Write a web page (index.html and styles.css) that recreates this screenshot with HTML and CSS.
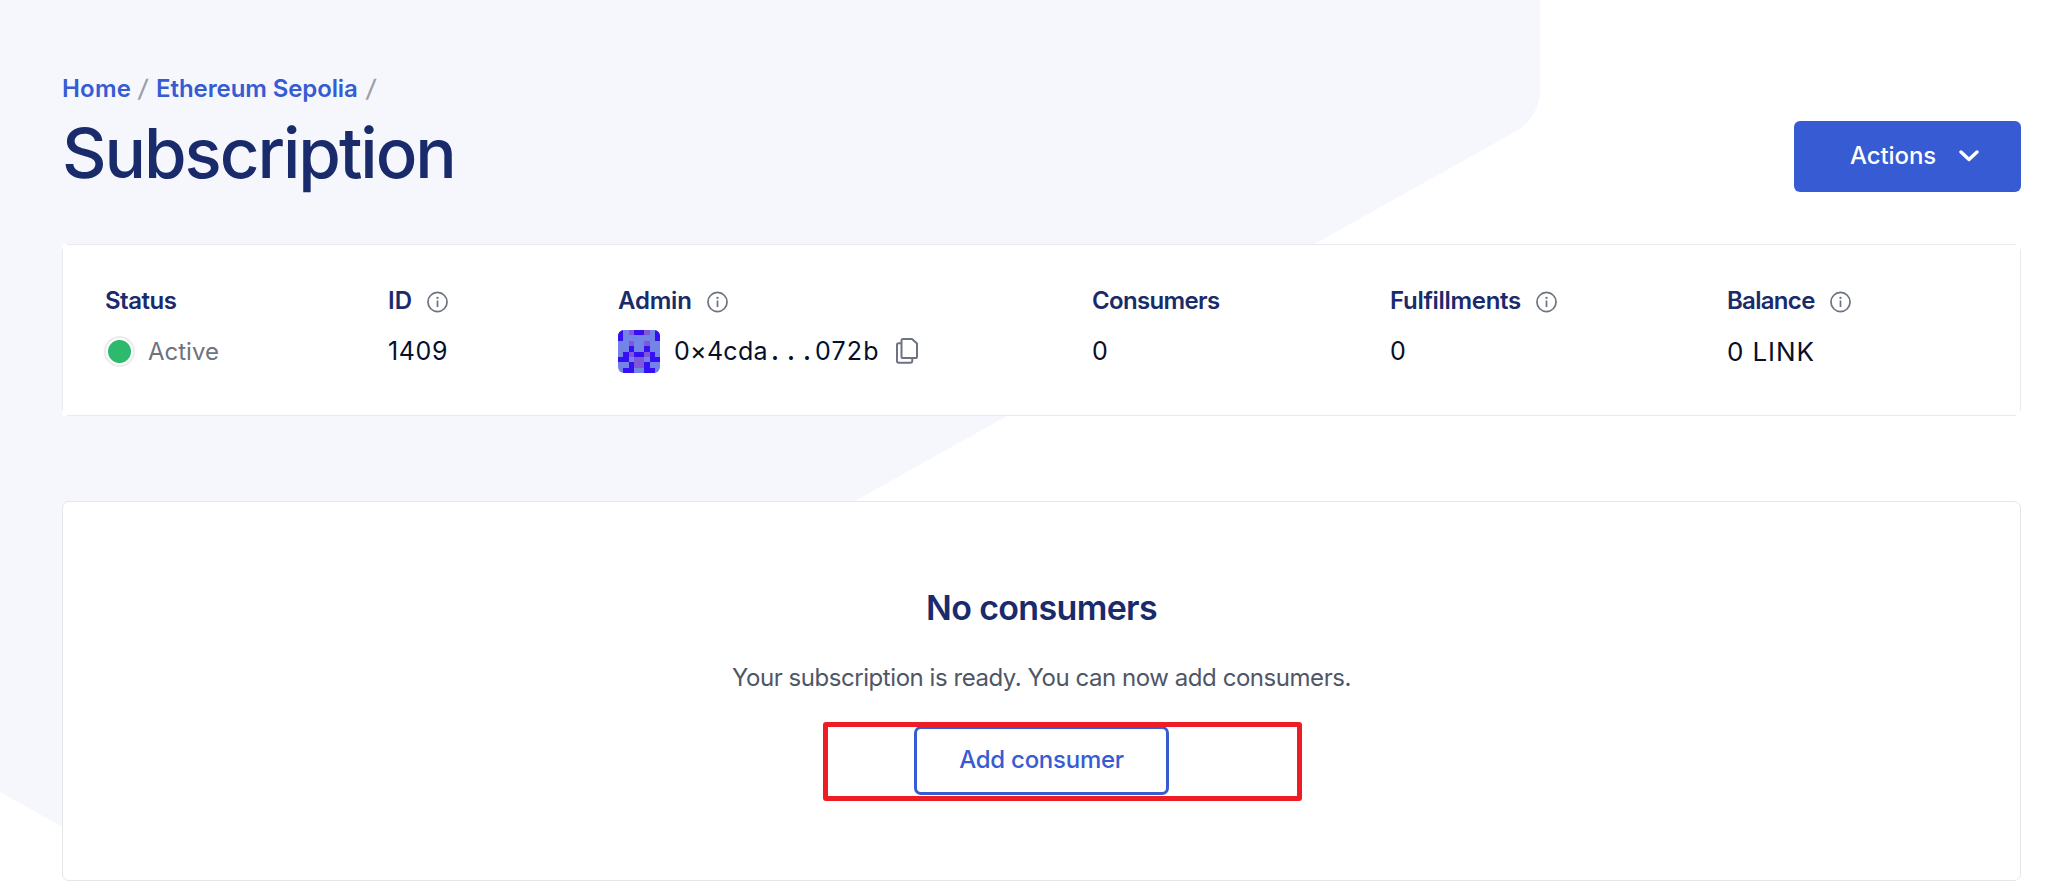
FILE: index.html
```html
<!DOCTYPE html>
<html lang="en">
<head>
<meta charset="utf-8">
<title>Subscription</title>
<link rel="stylesheet" href="styles.css">
</head>
<body>
<svg class="backdrop" viewBox="0 0 2053 887"><path d="M0 0H1540V97Q1536 117 1520 129L360 778Q240 845 120 856Q90 843 0 792Z" fill="#f5f7fd"/></svg>
<svg class="defs" width="0" height="0">
  <symbol id="info" viewBox="0 0 22 22"><g fill="none" stroke="#6d7380" stroke-width="1.8"><circle cx="11" cy="11" r="10"/><path d="M11 9.400V16.300" stroke-width="1.8"/></g><circle cx="11" cy="6.700" r="1.200" fill="#6d7380"/></symbol>
</svg>
<main class="page">
  <header class="head">
    <div>
      <nav class="crumbs"><a class="t home">Home</a><span class="slash">/</span><a class="t net">Ethereum Sepolia</a><span class="slash">/</span></nav>
      <h1 class="title"><span class="t">Subscription</span></h1>
    </div>
    <button class="actions"><span class="t">Actions</span><svg class="chev" viewBox="0 0 20 12"><path d="M2 2l8 7.500L18 2" fill="none" stroke="#fff" stroke-width="3.400" stroke-linecap="round" stroke-linejoin="round"/></svg></button>
  </header>
  <section class="stats">
    <div class="stat"><div class="label"><span class="t status">Status</span></div><div class="value active"><i class="dot"></i><span class="t">Active</span></div></div>
    <div class="stat"><div class="label"><span class="t id">ID</span><svg class="info"><use href="#info"/></svg></div><div class="value"><span class="t num">1409</span></div></div>
    <div class="stat"><div class="label"><span class="t admin">Admin</span><svg class="info"><use href="#info"/></svg></div>
      <div class="value addr">
        <svg class="avatar" viewBox="0 0 8 8" preserveAspectRatio="none" shape-rendering="crispEdges"><path fill="#7383e6" d="M0 0h8v8H0z"/><path fill="#3510f5" d="M0 0h1v2H0zM3 0h2v1H3zM7 0h1v2H7zM2 3h1v1H2zM5 3h1v1H5zM1 4h1v1H1zM3 4h2v1H3zM6 4h1v1H6zM0 5h2v1H0zM6 5h2v1H6zM2 6h1v1H2zM5 6h1v1H5zM1 7h2v1H1zM5 7h2v1H5z"/><path fill="#7f58d9" d="M2 0h1v1H2zM5 0h1v1H5zM2 2h1v1H2zM5 2h1v1H5zM2 4h1v1H2zM5 4h1v1H5zM3 5h2v2H3z"/></svg>
        <span class="hash"><span class="t h1">0×4cda</span><span class="t dots">...</span><span class="t h2">072b</span></span>
        <svg class="copy" viewBox="0 0 22 26"><g fill="none" stroke="#6d7380" stroke-width="2" stroke-linejoin="round"><path d="M5.500 2.600q0-1.600 1.600-1.600H16l5 4.600V18.400q0 1.600-1.600 1.600H7.100q-1.600 0-1.600-1.600z"/><path d="M5.500 5.200H2.500Q1 5.200 1 6.800V23q0 1.700 1.700 1.700H14.500q1.800 0 1.800-2V20"/></g></svg>
      </div></div>
    <div class="stat"><div class="label"><span class="t cons">Consumers</span></div><div class="value"><span class="t num">0</span></div></div>
    <div class="stat"><div class="label"><span class="t ful">Fulfillments</span><svg class="info"><use href="#info"/></svg></div><div class="value"><span class="t num">0</span></div></div>
    <div class="stat"><div class="label"><span class="t bal">Balance</span><svg class="info"><use href="#info"/></svg></div><div class="value"><span class="t link">0 LINK</span></div></div>
  </section>
  <section class="empty">
    <h2><span class="t">No consumers</span></h2>
    <p><span class="t">Your subscription is ready. You can now add consumers.</span></p>
    <div class="cta"><button class="add"><span class="t">Add consumer</span></button><div class="mark"></div></div>
  </section>
</main>
</body>
</html>
```
FILE: styles.css
```css
* { box-sizing: border-box; }
body { margin: 0; background: #fff; font-family: Inter, "Liberation Sans", sans-serif; color: #05102b; font-size: 24px; overflow: hidden; }
.backdrop { position: absolute; inset: 0; width: 2053px; height: 887px; z-index: -1; }
.defs { position: absolute; }
.page { padding: 73px 32px 0 62px; }
.t { white-space: nowrap; display: inline-block; }
.head { height: 171px; display: flex; justify-content: space-between; }
.crumbs { display: flex; gap: 7px; line-height: 32px; font-weight: 600; color: #375bd2; }
.home { letter-spacing: 0.2px; margin-right: -1px; }
.net { letter-spacing: -0.1px; }
.slash { color: #9c9fa8; font-weight: 500; width: 12px; text-align: center; transform: skewX(-8deg); }
.title { margin: 0; font-size: 69px; line-height: 96px; font-weight: 500; color: #1a2b6b; letter-spacing: -2.05px; }
.actions { margin-top: 48px; width: 227px; height: 71px; border: 0; border-radius: 6px; background: #375bd2; color: #fff; font: 500 24px/70px Inter, sans-serif; letter-spacing: -0.1px; padding: 0 42px 1px 56px; display: flex; align-items: center; justify-content: space-between; }
.chev { width: 20px; height: 12px; }
/* hairlines stop short of the corners */
.stats {
  height: 172px; padding: 41px 0 0 44px; display: grid; grid-template-columns: 282px 230px 474px 298px 337px 1fr;
  border-radius: 2px;
  background:
    linear-gradient(#e9eaed, #e9eaed) center top / calc(100% - 10px) 1px no-repeat,
    linear-gradient(#e9eaed, #e9eaed) center bottom / calc(100% - 10px) 1px no-repeat,
    linear-gradient(#e9eaed, #e9eaed) left center / 1px calc(100% - 10px) no-repeat,
    linear-gradient(#e9eaed, #e9eaed) right center / 1px calc(100% - 10px) no-repeat,
    #fff;
}
.label { display: flex; align-items: center; gap: 15px; height: 32px; color: #1a2b6b; font-weight: 600; line-height: 32px; }
.status { letter-spacing: -0.5px; margin-left: -1px; }
.admin { letter-spacing: -0.2px; }
.cons { letter-spacing: -0.65px; }
.ful { letter-spacing: -0.3px; }
.bal { letter-spacing: -0.7px; }
.info { width: 21px; height: 22px; position: relative; top: 1px; }
.value { display: flex; align-items: center; height: 44px; margin-top: 12px; font-size: 25px; }
.link { font-size: 26px; letter-spacing: 0.9px; }
.active { color: #6d7380; font-size: 24px; gap: 13px; margin-left: -2px; }
.dot { width: 31px; height: 31px; border-radius: 50%; border: 2px solid #ececee; background: radial-gradient(circle, #2fb96c 11px, #fff 12px); }
.avatar { width: 42px; height: 43px; border-radius: 6px; margin-right: 14px; }
.hash { display: flex; }
.num { letter-spacing: 0.6px; }
.h1 { letter-spacing: 0.3px; width: 92px; }
.dots { font-weight: 600; letter-spacing: 8px; padding-left: 5px; width: 49px; }
.h2 { letter-spacing: 1.2px; }
.copy { width: 22px; height: 26px; margin-left: 16px; }
.empty { margin-top: 85px; height: 380px; background: #fff; border: 1px solid #e4e6ea; border-radius: 7px; text-align: center; padding-top: 84px; }
h2 { margin: 0; font-size: 34px; line-height: 44px; font-weight: 600; color: #1a2b6b; letter-spacing: -0.65px; }
p { margin: 32px 0 0; line-height: 32px; color: #4f5665; letter-spacing: -0.45px; }
.cta { position: relative; margin-top: 32px; }
.add { width: 255px; height: 69px; border: 3px solid #375bd2; border-radius: 7px; background: #fff; color: #375bd2; font: 500 24px/60px Inter, sans-serif; letter-spacing: -0.25px; padding: 0 0 1px; }
.mark { position: absolute; left: 760px; top: -4px; width: 479px; height: 79px; border: 5px solid #ee1c25; border-radius: 3px; }
```
